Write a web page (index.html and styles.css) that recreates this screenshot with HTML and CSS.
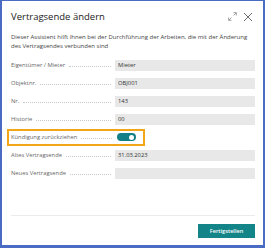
FILE: index.html
```html
<!DOCTYPE html>
<html lang="de">
<head>
    <meta charset="UTF-8">
    <meta name="viewport" content="width=device-width, initial-scale=1.0">
    <title>Vertragsende ändern</title>
    <link rel="stylesheet" href="styles.css">
</head>
<body>
<div class="dialog">
    <header class="dialog-header">
        <h1>Vertragsende ändern</h1>
        <div class="header-actions">
            <!-- Vergrößern -->
            <svg class="icon" width="9" height="9" viewBox="0 0 9 9">
                <path d="M5.5 0.7 H8.3 V3.5 M8.3 0.7 L5.6 3.4 M3.4 5.6 L0.7 8.3 M0.7 5.5 V8.3 H3.5" fill="none" stroke="#8a8a8a" stroke-width="0.8"/>
            </svg>
            <!-- Schließen -->
            <svg class="icon" width="10" height="10" viewBox="0 0 10 10">
                <path d="M1 1 L9 9 M9 1 L1 9" fill="none" stroke="#6e6e6e" stroke-width="1"/>
            </svg>
        </div>
    </header>

    <p class="intro">Dieser Assistent hilft Ihnen bei der Durchführung der Arbeiten, die mit der Änderung des Vertragsendes verbunden sind</p>

    <div class="fields">
        <div class="field">
            <span class="label">Eigentümer / Mieter</span><span class="dots"></span>
            <span class="value">Mieter</span>
        </div>
        <div class="field">
            <span class="label">Objektnr.</span><span class="dots"></span>
            <span class="value">OBJ001</span>
        </div>
        <div class="field">
            <span class="label">Nr.</span><span class="dots"></span>
            <span class="value">143</span>
        </div>
        <div class="field">
            <span class="label">Historie</span><span class="dots"></span>
            <span class="value">00</span>
        </div>
        <div class="field">
            <div class="highlight">
                <span class="label">Kündigung zurückziehen</span><span class="dots"></span>
                <span class="switch"></span>
            </div>
        </div>
        <div class="field">
            <span class="label">Altes Vertragsende</span><span class="dots"></span>
            <span class="value">31.03.2023</span>
        </div>
        <div class="field">
            <span class="label">Neues Vertragsende</span><span class="dots"></span>
            <span class="value"></span>
        </div>
    </div>

    <footer class="dialog-footer">
        <button class="primary">Fertigstellen</button>
    </footer>
</div>
</body>
</html>
```

FILE: styles.css
```css
html, body {
    margin: 0;
    padding: 0;
}

body {
    background: #4a6bc3;
    font-family: "Open Sans", "Noto Sans", sans-serif;
    color: #333;
    width: 265px;
    height: 248px;
    overflow: hidden;
}

.dialog {
    margin: 1px 2px 0 2px;
    height: 244px;
    background: #fff;
    box-sizing: border-box;
    padding: 0 8px 0 9px;
    display: flex;
    flex-direction: column;
}

.dialog-header {
    display: flex;
    justify-content: space-between;
    align-items: center;
    padding-top: 7px;
    height: 17px;
}

.dialog-header h1 {
    margin: 0;
    font-size: 9.5px;
    font-weight: 400;
    color: #222;
    line-height: 14px;
}

.header-actions {
    display: flex;
    align-items: center;
    gap: 6px;
    margin-right: 2px;
}

.icon {
    display: block;
}

.intro {
    margin: 8px 0 0;
    font-size: 6px;
    line-height: 9px;
    color: #444;
}

.fields {
    margin-top: 5px;
}

.field {
    display: flex;
    align-items: center;
    height: 18px;
    font-size: 5.8px;
}

.label {
    color: #666;
    white-space: nowrap;
}

.dots {
    flex: 1;
    border-bottom: 1px dotted #c8c8c8;
    margin: 2px 4px 0 4px;
    height: 0;
}

.value {
    width: 140px;
    height: 11px;
    line-height: 11px;
    background: #e8e8e8;
    padding-left: 3px;
    box-sizing: border-box;
    color: #333;
    flex: none;
}

.highlight {
    display: flex;
    align-items: center;
    margin-left: -4px;
    padding-left: 2px;
    width: 138px;
    height: 17px;
    border: 2px solid #f2a516;
    box-sizing: border-box;
}

.highlight .dots {
    margin-right: 5px;
}

.switch {
    position: relative;
    width: 19px;
    height: 8px;
    border-radius: 4px;
    background: #137f86;
    flex: none;
    margin-right: 7px;
}

.switch::after {
    content: "";
    position: absolute;
    right: 2px;
    top: 1.5px;
    width: 5px;
    height: 5px;
    border-radius: 50%;
    background: #fff;
}

.dialog-footer {
    margin-top: auto;
    border-top: 1px solid #ebebeb;
    display: flex;
    justify-content: flex-end;
    padding: 8px 0 7px;
}

.primary {
    width: 57px;
    height: 14px;
    border: none;
    background: #138487;
    color: #fff;
    font-family: "Open Sans", "Noto Sans", sans-serif;
    font-size: 5.6px;
    font-weight: 600;
    padding: 0;
}
```
